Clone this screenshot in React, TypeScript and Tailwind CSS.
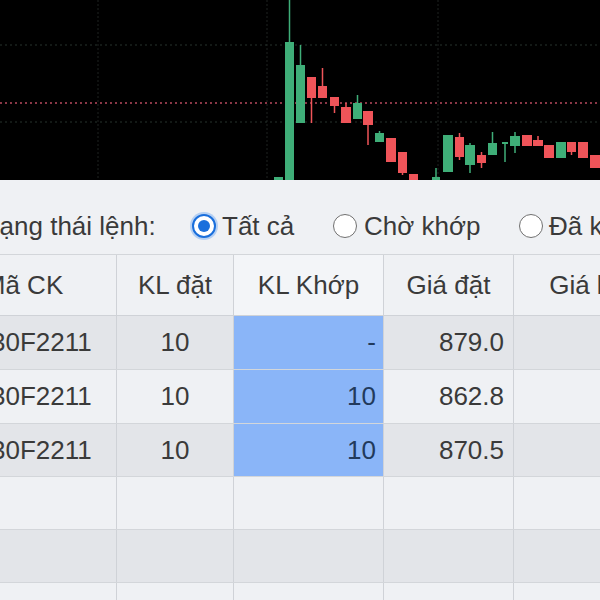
import React from 'react';

type Candle = [number, number, number, number, number, number, 'g' | 'r'];

// x, width, bodyTop, bodyBottom, wickTop, wickBottom, color
const candles: Candle[] = [
  [274, 9, 177, 181, 177, 181, 'g'],
  [285, 9, 42, 181, 0, 181, 'g'],
  [296, 9, 65, 123, 45, 123, 'g'],
  [307, 9, 77, 98, 77, 123, 'r'],
  [318, 9, 86, 98, 68, 98, 'r'],
  [330, 9, 97, 106, 97, 113, 'r'],
  [341, 10, 107, 123, 103, 123, 'r'],
  [353, 9, 103, 119, 95, 119, 'g'],
  [363, 10, 111, 125, 111, 145, 'r'],
  [375, 9, 133, 142, 131, 142, 'g'],
  [386, 10, 138, 162, 138, 162, 'r'],
  [398, 9, 152, 173, 152, 175, 'r'],
  [409, 9, 174, 181, 174, 181, 'r'],
  [432, 8, 177, 181, 168, 181, 'g'],
  [443, 10, 135, 172, 135, 172, 'g'],
  [455, 9, 137, 157, 133, 160, 'r'],
  [465, 10, 145, 165, 143, 173, 'g'],
  [477, 9, 155, 163, 152, 168, 'r'],
  [488, 9, 143, 155, 132, 155, 'g'],
  [502, 6, 142, 144, 142, 162, 'g'],
  [510, 10, 136, 146, 132, 153, 'g'],
  [522, 10, 135, 146, 135, 146, 'r'],
  [533, 10, 140, 146, 136, 146, 'r'],
  [544, 10, 145, 158, 145, 158, 'r'],
  [556, 10, 142, 158, 142, 158, 'g'],
  [567, 9, 142, 152, 142, 155, 'r'],
  [578, 10, 142, 158, 142, 158, 'r'],
  [590, 10, 155, 168, 155, 168, 'r'],
];

const Chart = () => (
  <svg width="600" height="180" viewBox="0 0 600 180" className="block">
    <rect width="600" height="180" fill="#000" />
    {[98, 267, 438].map((x) => (
      <line key={x} x1={x} y1={0} x2={x} y2={180} stroke="#1f2321" strokeWidth="1" strokeDasharray="2 2" />
    ))}
    {[45, 122].map((y) => (
      <line key={y} x1={0} y1={y} x2={600} y2={y} stroke="#26332d" strokeWidth="1.2" strokeDasharray="2 3" />
    ))}
    <line x1={0} y1={103} x2={600} y2={103} stroke="#b84a5e" strokeWidth="1.6" strokeDasharray="2 3" />
    {candles.map(([x, w, bt, bb, wt, wb, c], i) => {
      const col = c === 'g' ? '#3fae78' : '#ef5459';
      return (
        <g key={i}>
          <line x1={x + w / 2} y1={wt} x2={x + w / 2} y2={wb} stroke={col} strokeWidth="1.5" />
          <rect x={x} y={bt} width={w} height={Math.max(bb - bt, 2)} fill={col} />
        </g>
      );
    })}
  </svg>
);

const Radio = ({ checked }: { checked?: boolean }) =>
  checked ? (
    <span className="flex h-[24px] w-[24px] shrink-0 items-center justify-center rounded-full border-2 border-[#1a6fdc] bg-white shadow-[0_0_0_2px_#b5d0f3]">
      <span className="h-[12px] w-[12px] rounded-full bg-[#1a6fdc]" />
    </span>
  ) : (
    <span className="h-[24px] w-[24px] shrink-0 rounded-full border-[1.5px] border-[#707070] bg-white" />
  );

const rows = [
  { code: '30F2211', kl: '10', khop: '-', gia: '879.0', hl: true },
  { code: '30F2211', kl: '10', khop: '10', gia: '862.8', hl: true },
  { code: '30F2211', kl: '10', khop: '10', gia: '870.5', hl: true },
  { code: '', kl: '', khop: '', gia: '', hl: false },
  { code: '', kl: '', khop: '', gia: '', hl: false },
  { code: '', kl: '', khop: '', gia: '', hl: false },
];

const cell = 'flex h-full items-center border-r border-[#cfd2d7]';

export default function App() {
  return (
    <div
      className="h-[600px] w-[600px] overflow-hidden bg-[#eef0f3] text-[26px] text-[#3a3a3a]"
      style={{ fontFamily: '"Liberation Sans", Arial, sans-serif' }}
    >
      <Chart />

      <div className="h-[75px] border-b border-[#d3d6da] bg-[#eff1f4] pt-[18px]">
        <div className="ml-[-24px] flex h-full items-center whitespace-nowrap">
          <span className="w-[216px] shrink-0">Trạng thái lệnh:</span>
          <label className="flex w-[141px] shrink-0 items-center gap-[6px]">
            <Radio checked />
            <span>Tất cả</span>
          </label>
          <label className="flex w-[186px] shrink-0 items-center gap-[7px]">
            <Radio />
            <span>Chờ khớp</span>
          </label>
          <label className="flex shrink-0 items-center gap-[6px]">
            <Radio />
            <span>Đã khớp</span>
          </label>
        </div>
      </div>

      <div className="ml-[-69px] w-[761px]">
        <div className="grid h-[61px] grid-cols-[186px_117px_150px_130px_178px] border-b border-[#cfd2d7] bg-[#eff1f4]">
          <div className={`${cell} justify-center`}>Mã CK</div>
          <div className={`${cell} justify-center`}>KL đặt</div>
          <div className={`${cell} justify-center bg-[#f3f5f8]`}>KL Khớp</div>
          <div className={`${cell} justify-center`}>Giá đặt</div>
          <div className={`${cell} justify-center`}>Giá khớp</div>
        </div>
        {rows.map((r, i) => (
          <div
            key={i}
            className={`grid grid-cols-[186px_117px_150px_130px_178px] border-b border-[#d3d6da] ${
              i < 2 ? 'h-[54px]' : 'h-[53px]'
            } ${i % 2 === 0 ? 'bg-[#e3e5e9]' : 'bg-[#eff1f4]'}`}
          >
            <div className={`${cell} pl-[60px]`}>{r.code}</div>
            <div className={`${cell} justify-center`}>{r.kl}</div>
            <div
              className={`${cell} justify-end pr-[7px] ${
                r.hl ? 'bg-[#8ab5f8] text-[#223a5c]' : ''
              }`}
            >
              {r.khop}
            </div>
            <div className={`${cell} justify-end pr-[9px]`}>{r.gia}</div>
            <div className={cell} />
          </div>
        ))}
      </div>
    </div>
  );
}
